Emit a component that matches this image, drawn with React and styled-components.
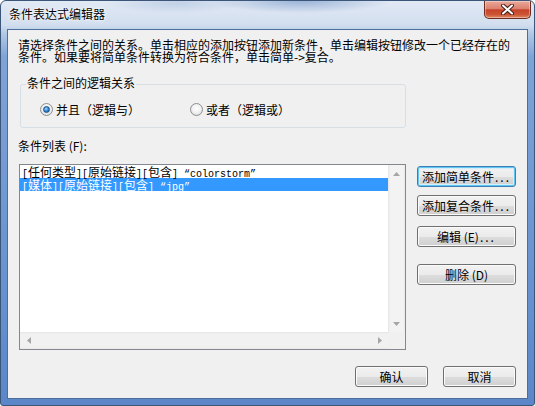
import React from "react";
import styled, { createGlobalStyle } from "styled-components";

const GlobalStyle = createGlobalStyle`
  html, body {
    margin: 0;
    padding: 0;
    background: #ffffff;
  }
  body {
    font-family: "Noto Sans CJK SC", "Noto Sans", sans-serif;
    font-size: 12px;
    color: #000;
  }
`;

const Window = styled.div`
  width: 535px;
  height: 406px;
  box-sizing: border-box;
  display: flex;
  flex-direction: column;
  border: 1px solid #3b5679;
  border-radius: 6px 6px 3px 3px;
  padding-bottom: 6px;
  overflow: hidden;
  background: linear-gradient(
    180deg,
    #e1e9f4 0px,
    #d2deef 24px,
    #b4c9e6 32px,
    #7ea3d7 56px,
    #6892cf 70%,
    #5b87c8 100%
  );
`;

const TitleBar = styled.div`
  height: 28px;
  flex-shrink: 0;
  display: flex;
  align-items: flex-start;
  background:
    radial-gradient(ellipse 90px 12px at 300px 0px, rgba(70, 115, 180, 0.45), transparent),
    radial-gradient(ellipse 70px 10px at 175px 2px, rgba(120, 155, 200, 0.3), transparent);
`;

const Title = styled.div`
  padding: 7px 0 0 8px;
  line-height: 12px;
  font-size: 12px;
  text-shadow: 0 0 5px #ffffff, 0 0 2px #ffffff;
`;

const CloseButton = styled.div`
  margin-left: auto;
  margin-right: 3px;
  width: 47px;
  height: 18px;
  box-sizing: border-box;
  border: 1px solid #6d2b21;
  border-top: none;
  border-radius: 0 0 5px 5px;
  display: flex;
  align-items: center;
  justify-content: center;
  background: linear-gradient(
    180deg,
    #eaa99a 0%,
    #dc8170 45%,
    #c5432a 52%,
    #cc5535 80%,
    #e08d66 100%
  );
  box-shadow: inset 0 0 0 1px rgba(255, 255, 255, 0.35);
`;

const Client = styled.div`
  flex: 1;
  margin: 0 6px;
  border: 1px solid #4d6d9a;
  background: #f0f0f0;
  display: flex;
  flex-direction: column;
  padding: 9px 0 0 11px;
`;

const Description = styled.div`
  margin-left: -1px;
  line-height: 12px;
  white-space: nowrap;
`;

const GroupBox = styled.div`
  position: relative;
  margin: 21px 0 0 1px;
  width: 386px;
  height: 44px;
  box-sizing: border-box;
  border: 1px solid #d5dfe5;
  border-radius: 3px;
  display: flex;
  padding: 18px 0 0 19px;
`;

const Legend = styled.span`
  position: absolute;
  top: -8px;
  left: 5px;
  padding: 0 1px;
  line-height: 12px;
  background: #f0f0f0;
`;

const RadioItem = styled.label`
  width: 150px;
  height: 13px;
  display: flex;
  align-items: center;
  gap: 3px;
  line-height: 13px;
`;

const RadioCircle = styled.span`
  width: 13px;
  height: 13px;
  box-sizing: border-box;
  border-radius: 50%;
  border: 1px solid #8e8f8f;
  background: radial-gradient(circle at 50% 40%, #ffffff 0%, #f2f2f2 45%, #d3d3d3 100%);
  display: flex;
  align-items: center;
  justify-content: center;
  flex-shrink: 0;

  &::after {
    content: "";
    width: 5px;
    height: 5px;
    border-radius: 50%;
    border: 1px solid #1e4f82;
    display: ${({ $checked }) => ($checked ? "block" : "none")};
    background: radial-gradient(circle at 40% 35%, #9ad6ff 0%, #2f82d2 55%, #1b508c 100%);
  }
`;

const ListLabel = styled.div`
  margin: 12px 0 0 -1px;
  line-height: 12px;
`;

const ListRow = styled.div`
  margin-top: 12px;
  display: flex;
  align-items: flex-start;
`;

const ListBox = styled.div`
  width: 387px;
  height: 186px;
  box-sizing: border-box;
  border: 1px solid #828790;
  background: #ffffff;
  display: grid;
  grid-template-columns: 1fr 17px;
  grid-template-rows: 1fr 17px;
`;

const Items = styled.div`
  padding-top: 0;
`;

const Item = styled.div`
  height: 13px;
  line-height: 13px;
  padding-left: 2px;
  white-space: nowrap;
  background: ${({ $selected }) => ($selected ? "#3399ff" : "transparent")};
  color: ${({ $selected }) => ($selected ? "#ffffff" : "#000000")};
`;

const Mono = styled.span`
  font-family: "Liberation Mono", "DejaVu Sans Mono", monospace;
  font-size: 10px;
`;

const VScroll = styled.div`
  display: flex;
  flex-direction: column;
  justify-content: space-between;
  background: linear-gradient(90deg, #e4e4e4 0, #f3f3f3 2px, #f3f3f3 15px, #e9e9e9 17px);
`;

const HScroll = styled.div`
  display: flex;
  justify-content: space-between;
  background: linear-gradient(180deg, #e4e4e4 0, #f1f1f1 2px, #f1f1f1 15px, #e9e9e9 17px);
`;

const Corner = styled.div`
  background: #f0f0f0;
`;

const ArrowCell = styled.div`
  width: 17px;
  height: 17px;
  display: flex;
  align-items: center;
  justify-content: center;
`;

const ButtonColumn = styled.div`
  margin-left: 11px;
  padding-top: 2px;
  display: flex;
  flex-direction: column;
`;

const Button = styled.div`
  width: ${({ $w }) => $w || 99}px;
  height: 21px;
  margin-top: ${({ $mt }) => $mt || 0}px;
  box-sizing: border-box;
  border: 1px solid ${({ $default }) => ($default ? "#3c7fb1" : "#707070")};
  border-radius: 3px;
  display: flex;
  align-items: center;
  justify-content: center;
  line-height: 12px;
  white-space: nowrap;
  background: linear-gradient(180deg, #f2f2f2 0%, #ebebeb 50%, #dddddd 51%, #cfcfcf 100%);
  box-shadow: ${({ $default }) =>
    $default ? "inset 0 0 0 1px #62c6f5, inset 0 0 0 2px #d4eefb" : "inset 0 0 0 1px #fbfbfb"};
`;

const Dots = styled.span`
  letter-spacing: 2px;
  margin-left: 1px;
`;

const Footer = styled.div`
  margin-top: 16px;
  padding-right: 11px;
  display: flex;
  justify-content: flex-end;
  gap: 15px;
`;

const Arrow = ({ dir }) => {
  const points = {
    up: "0,4 3.5,0 7,4",
    down: "0,0 3.5,4 7,0",
    left: "4,0 0,3.5 4,7",
    right: "0,0 4,3.5 0,7",
  }[dir];
  const vertical = dir === "up" || dir === "down";
  return (
    <svg width={vertical ? 7 : 4} height={vertical ? 4 : 7}>
      <polygon points={points} fill="#a6a6a6" />
    </svg>
  );
};

// half-width runs go in the mono font so they keep the 6px cell of the original
const renderRuns = (text) =>
  text.split(/([\u3000-\u9fff\uff00-\uffef]+)/).map((part, i) =>
    /[\u3000-\u9fff\uff00-\uffef]/.test(part) ? (
      <span key={i}>{part}</span>
    ) : part ? (
      <Mono key={i}>{part}</Mono>
    ) : null
  );

const items = [
  { text: "[任何类型][原始链接][包含] “colorstorm”", selected: false },
  { text: "[媒体][原始链接][包含] “jpg”", selected: true },
];

const App = () => (
  <>
    <GlobalStyle />
    <Window>
      <TitleBar>
        <Title>条件表达式编辑器</Title>
        <CloseButton>
          <svg width="13" height="11" viewBox="0 0 13 11">
            <path d="M2 1.5 L11 9.5 M11 1.5 L2 9.5" stroke="#4a1d16" strokeWidth="4" strokeLinecap="round" />
            <path d="M2 1.5 L11 9.5 M11 1.5 L2 9.5" stroke="#ffffff" strokeWidth="2" strokeLinecap="round" />
          </svg>
        </CloseButton>
      </TitleBar>
      <Client>
        <Description>
          请选择条件之间的关系。单击相应的添加按钮添加新条件，单击编辑按钮修改一个已经存在的
          <br />
          条件。如果要将简单条件转换为符合条件，单击简单-&gt;复合。
        </Description>

        <GroupBox>
          <Legend>条件之间的逻辑关系</Legend>
          <RadioItem>
            <RadioCircle $checked />
            并且（逻辑与）
          </RadioItem>
          <RadioItem>
            <RadioCircle />
            或者（逻辑或）
          </RadioItem>
        </GroupBox>

        <ListLabel>条件列表 (F):</ListLabel>

        <ListRow>
          <ListBox>
            <Items>
              {items.map((item, i) => (
                <Item key={i} $selected={item.selected}>
                  {renderRuns(item.text)}
                </Item>
              ))}
            </Items>
            <VScroll>
              <ArrowCell>
                <Arrow dir="up" />
              </ArrowCell>
              <ArrowCell>
                <Arrow dir="down" />
              </ArrowCell>
            </VScroll>
            <HScroll>
              <ArrowCell>
                <Arrow dir="left" />
              </ArrowCell>
              <ArrowCell>
                <Arrow dir="right" />
              </ArrowCell>
            </HScroll>
            <Corner />
          </ListBox>

          <ButtonColumn>
            <Button $default>
              添加简单条件<Dots>...</Dots>
            </Button>
            <Button $mt={8}>
              添加复合条件<Dots>...</Dots>
            </Button>
            <Button $mt={10}>
              编辑 (E)<Dots>...</Dots>
            </Button>
            <Button $mt={17}>删除 (D)</Button>
          </ButtonColumn>
        </ListRow>

        <Footer>
          <Button $w={73}>确认</Button>
          <Button $w={73}>取消</Button>
        </Footer>
      </Client>
    </Window>
  </>
);

export default App;
